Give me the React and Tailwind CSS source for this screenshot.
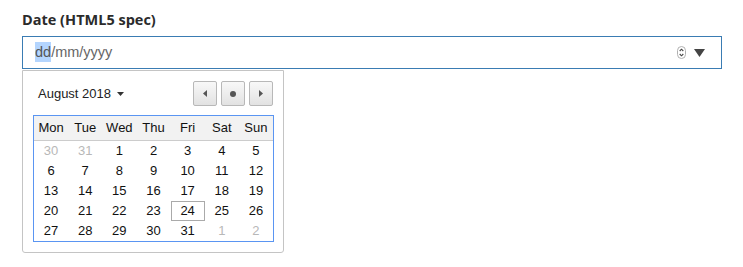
import React from 'react'

const weeks = [
    [['30', true], ['31', true], ['1'], ['2'], ['3'], ['4'], ['5']],
    [['6'], ['7'], ['8'], ['9'], ['10'], ['11'], ['12']],
    [['13'], ['14'], ['15'], ['16'], ['17'], ['18'], ['19']],
    [['20'], ['21'], ['22'], ['23'], ['24'], ['25'], ['26']],
    [['27'], ['28'], ['29'], ['30'], ['31'], ['1', true], ['2', true]],
]

const days = ['Mon', 'Tue', 'Wed', 'Thu', 'Fri', 'Sat', 'Sun']

const NavButton = ({ children }) => (
    <div className="w-[24px] h-[25px] flex items-center justify-center border border-[#b8b8b8] rounded-[2px] bg-gradient-to-b from-[#f8f8f8] to-[#e2e2e2]">
        {children}
    </div>
)

const App = () => {
    return (
        <div className="min-h-screen bg-white pl-[22px] pt-[11px] font-['Liberation_Sans',Arial,sans-serif]">

            {/* Label */}
            <div className="text-[14.5px] leading-[18px] font-bold text-[#2b2b2b] font-['Open_Sans',sans-serif]">
                Date (HTML5 spec)
            </div>

            {/* Input */}
            <div className="mt-[7px] w-[700px] h-[33px] border border-[#3a7cb3] flex items-center pl-[12px] pr-[16px]">
                <span className="text-[14.5px] text-[#666]">
                    <span className="bg-[#b4d5fe] text-[#555] py-[2px]">dd</span>/mm/yyyy
                </span>
                <div className="flex-1" />
                <svg width="9" height="13" viewBox="0 0 9 13" className="mr-[8px]">
                    <rect x="0.5" y="0.5" width="8" height="12" rx="4" fill="none" stroke="#b0b0b0" />
                    <path d="M2.7 5 L4.5 3.2 L6.3 5" fill="none" stroke="#444" strokeWidth="1.1" />
                    <path d="M2.7 8 L4.5 9.8 L6.3 8" fill="none" stroke="#444" strokeWidth="1.1" />
                </svg>
                <svg width="11" height="8" viewBox="0 0 11 8">
                    <path d="M0 0 H11 L5.5 8 Z" fill="#444" />
                </svg>
            </div>

            {/* Popup */}
            <div className="mt-[1px] w-[262px] border border-[#c4c4c4] rounded-b-[3px] pl-[10px] pr-[9px] pt-[10px] pb-[10px] text-[13px]">

                <div className="flex items-center justify-between h-[25px]">
                    <div className="flex items-center gap-[6px] pl-[5px] text-[#222]">
                        <span>August 2018</span>
                        <svg width="7" height="4" viewBox="0 0 7 4">
                            <path d="M0 0 H7 L3.5 4 Z" fill="#333" />
                        </svg>
                    </div>
                    <div className="flex gap-[4px] pr-[1px]">
                        <NavButton>
                            <svg width="4" height="7" viewBox="0 0 4 7"><path d="M4 0 V7 L0 3.5 Z" fill="#555" /></svg>
                        </NavButton>
                        <NavButton>
                            <div className="w-[6px] h-[6px] rounded-full bg-[#555]" />
                        </NavButton>
                        <NavButton>
                            <svg width="4" height="7" viewBox="0 0 4 7"><path d="M0 0 V7 L4 3.5 Z" fill="#555" /></svg>
                        </NavButton>
                    </div>
                </div>

                {/* Calendar table: blue frame */}
                <div className="mt-[9px] w-[241px] p-[1px] bg-[#5a95f2]">
                    <div className="bg-white">
                        <div className="grid grid-cols-7 h-[25px] bg-[#f2f2f2] border-b border-[#cccccc] text-[#111]">
                            {days.map((d) => (
                                <div key={d} className="flex items-center justify-center">{d}</div>
                            ))}
                        </div>
                        {weeks.map((week, i) => (
                            <div key={i} className="grid grid-cols-7">
                                {week.map(([n, muted], j) => (
                                    <div
                                        key={j}
                                        className={`h-[20px] flex items-center justify-center ${muted ? 'text-[#b8b8b8]' : 'text-[#111]'} ${n === '24' ? 'border border-[#aaaaaa]' : ''}`}
                                    >
                                        {n}
                                    </div>
                                ))}
                            </div>
                        ))}
                    </div>
                </div>
            </div>
        </div>
    )
}

export default App
